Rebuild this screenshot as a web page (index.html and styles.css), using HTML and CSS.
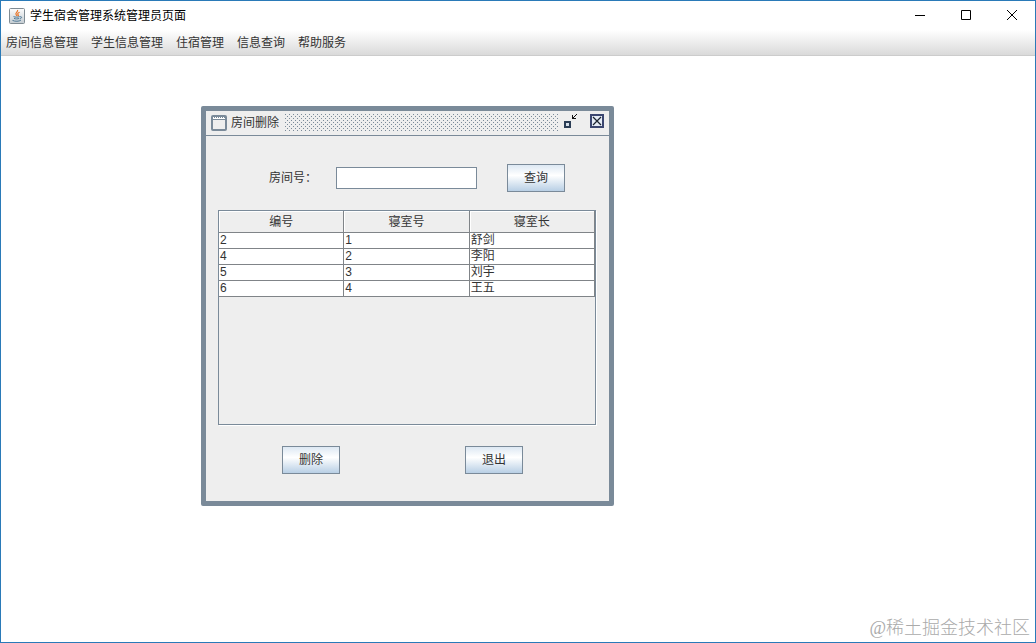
FILE: index.html
```
<!DOCTYPE html>
<html lang="zh-CN">
  <head>
    <meta charset="UTF-8" />
    <meta name="viewport" content="width=device-width, initial-scale=1.0" />
    <title>学生宿舍管理系统管理员页面</title>
    <link rel="stylesheet" href="styles.css">
  </head>
  <body>
    <div class="window">
      <header>
        <div class="title-bar">
          <svg class="app-icon" width="16" height="16" viewBox="0 0 16 16">
            <defs>
              <linearGradient id="icon-bg" x1="0" y1="0" x2="0" y2="1">
                <stop offset="0" stop-color="#fdfdfd" />
                <stop offset="1" stop-color="#c4ccd2" />
              </linearGradient>
            </defs>
            <rect x="0.5" y="0.5" width="15" height="15" rx="1" fill="url(#icon-bg)" stroke="#7f8b93" />
            <path d="M8.5 2c1.2 1.8-2.8 2.6-1.4 4.6l.9 1.4M10.6 4.2c-2 .8-2.4 1.6-1.4 2.6.5.6.2 1-.4 1.4" fill="none" stroke="#e8762c" stroke-width="1.2" />
            <path d="M4.5 8.6c1.6.7 4.8.7 6.2 0M5 10.4c1.5.7 3.9.7 5.2 0M3.5 12.4c2.4 1.2 6.6 1.1 8.4-.2M11 8.8c2.4-.5 2 1.6-.2 2" fill="none" stroke="#4d7896" />
          </svg>
          <h1>学生宿舍管理系统管理员页面</h1>
          <div class="window-buttons">
            <button type="button" aria-label="最小化">
              <svg width="12" height="12" viewBox="0 0 12 12"><path d="M1 5.5h10" /></svg>
            </button>
            <button type="button" aria-label="最大化">
              <svg width="12" height="12" viewBox="0 0 12 12"><path d="M1.5 0.5h9v9h-9z" /></svg>
            </button>
            <button type="button" aria-label="关闭">
              <svg width="12" height="12" viewBox="0 0 12 12"><path d="M1 0l10 10M11 0L1 10" /></svg>
            </button>
          </div>
        </div>
        <nav class="menu-bar">
          <button type="button">房间信息管理</button>
          <button type="button">学生信息管理</button>
          <button type="button">住宿管理</button>
          <button type="button">信息查询</button>
          <button type="button">帮助服务</button>
        </nav>
      </header>

      <main class="desktop">
        <!-- Room delete window -->
        <section class="frame">
          <div class="frame-title">
            <svg width="16" height="16" viewBox="0 0 16 16">
              <rect x="1" y="1" width="14" height="14" rx="1" fill="#eee" stroke="#7a8a99" stroke-width="2" />
              <path d="M2 2.5h12M2 3.5h12" stroke="#fff" />
              <path d="M3 2.5h11" stroke="#7a8a99" stroke-dasharray="1 1" />
              <path d="M2 4.5h12" stroke="#7a8a99" />
            </svg>
            <h2>房间删除</h2>
            <div class="grip"></div>
            <button type="button" class="restore" aria-label="还原">
              <svg width="16" height="16" viewBox="0 0 16 16">
                <rect x="3" y="9" width="5" height="5" fill="#d5dfea" stroke="#2b3d55" stroke-width="2" />
                <path d="M10.5 2v4M10 5.5h4M11 5l4-4" fill="none" stroke="#111" />
              </svg>
            </button>
            <button type="button" aria-label="关闭窗口">
              <svg width="16" height="16" viewBox="0 0 16 16">
                <rect x="2" y="2" width="12" height="12" fill="#e6edf6" stroke="#3b4670" stroke-width="2" />
                <path d="M4 4l8 8M12 4l-8 8" stroke="#1c2430" stroke-width="1.2" />
              </svg>
            </button>
          </div>
          <form class="frame-body">
            <div class="search">
              <label for="room">房间号：</label>
              <input type="text" id="room">
              <button type="button" class="push">查询</button>
            </div>
            <div class="table-box">
              <table>
                <thead>
                  <tr><th>编号</th><th>寝室号</th><th>寝室长</th></tr>
                </thead>
                <tbody>
                  <tr><td>2</td><td>1</td><td>舒剑</td></tr>
                  <tr><td>4</td><td>2</td><td>李阳</td></tr>
                  <tr><td>5</td><td>3</td><td>刘宇</td></tr>
                  <tr><td>6</td><td>4</td><td>王五</td></tr>
                </tbody>
              </table>
            </div>
            <div class="actions">
              <button type="button" class="push">删除</button>
              <button type="button" class="push">退出</button>
            </div>
          </form>
        </section>
      </main>
      <p class="watermark">@稀土掘金技术社区</p>
    </div>
  </body>
</html>
```
FILE: styles.css
```
* {
  box-sizing: border-box;
}

body {
  margin: 0;
  font-family: "Liberation Sans", "Noto Sans CJK SC", sans-serif;
  font-size: 12px;
  line-height: 16px;
  color: #333;
}

button,
input {
  font: inherit;
  color: inherit;
  margin: 0;
  padding: 0;
}

button {
  border: none;
  background: none;
}

h1,
h2 {
  margin: 0;
  font-size: 12px;
  font-weight: normal;
}

svg {
  display: block;
}

.window {
  position: relative;
  display: flex;
  flex-direction: column;
  min-height: 100vh;
  border: 1px solid #2a7ab8;
  background: #fff;
}

.title-bar {
  display: flex;
  align-items: center;
  height: 29px;
  padding-left: 8px;
  gap: 5px;
}

h1 {
  color: #000;
}

.window-buttons {
  display: flex;
  margin-left: auto;
}

.window-buttons button {
  display: flex;
  align-items: center;
  justify-content: center;
  width: 46px;
  height: 28px;
}

.window-buttons path {
  fill: none;
  stroke: #000;
}

.menu-bar {
  display: flex;
  align-items: center;
  gap: 13px;
  height: 26px;
  padding: 0 5px;
  background: linear-gradient(#fff, #dadada);
  border-bottom: 1px solid #ccc;
}

.desktop {
  position: relative;
  flex: 1;
}

/* inner window, placed freely on the desktop */
.frame {
  position: absolute;
  left: 200px;
  top: 50px;
  width: 413px;
  border: 5px solid #7a8a99;
  border-radius: 2px;
  background: #eee;
}

.frame-title {
  display: flex;
  align-items: center;
  height: 25px;
  padding: 0 4px 0 5px;
  border-bottom: 1px solid #7a8a99;
}

h2 {
  margin-left: 4px;
}

.grip {
  flex: 1;
  height: 18px;
  margin: 0 4px 0 6px;
  background-image: url("data:image/svg+xml,%3Csvg xmlns='http://www.w3.org/2000/svg' width='4' height='4'%3E%3Cpath d='M0 0h1v1H0zM2 2h1v1H2z' fill='%237a8a99'/%3E%3C/svg%3E");
}

.restore {
  margin-right: 11px;
}

.frame-title button {
  padding-bottom: 4px;
}

.frame-body {
  padding: 28px 13px 27px 12px;
}

.search {
  display: flex;
  align-items: center;
  padding: 0 31px 0 51px;
}

.search label {
  width: 67px;
}

.search input {
  width: 141px;
  height: 22px;
  margin-right: 30px;
  padding: 0 2px;
  border: 1px solid #7a8a99;
  background: #fff;
}

.push {
  width: 58px;
  height: 28px;
  border: 1px solid #7a8a99;
  background: linear-gradient(#dde8f3, #fff 40%, #b8cfe5);
}

.table-box {
  height: 215px;
  margin: 18px 0 21px;
  border: 1px solid #7a8a99;
  box-shadow: 1px 1px #fff;
}

table {
  width: 100%;
  table-layout: fixed;
  border-collapse: separate;
  border-spacing: 0;
}

th,
td {
  padding: 0 1px;
  border-right: 1px solid #808488;
  border-bottom: 1px solid #808488;
}

th {
  height: 22px;
  font-weight: normal;
  box-shadow: inset 1px 1px #fff;
}

td {
  height: 16px;
  line-height: 15px;
  background: #fff;
}

.actions {
  display: flex;
  justify-content: space-between;
  padding: 0 73px 0 64px;
}

.watermark {
  position: absolute;
  right: 5px;
  bottom: 2px;
  margin: 0;
  font-family: "Liberation Serif", "Noto Sans CJK SC", serif;
  font-size: 18px;
  font-weight: 300;
  line-height: 24px;
  color: #aaa;
}
```
